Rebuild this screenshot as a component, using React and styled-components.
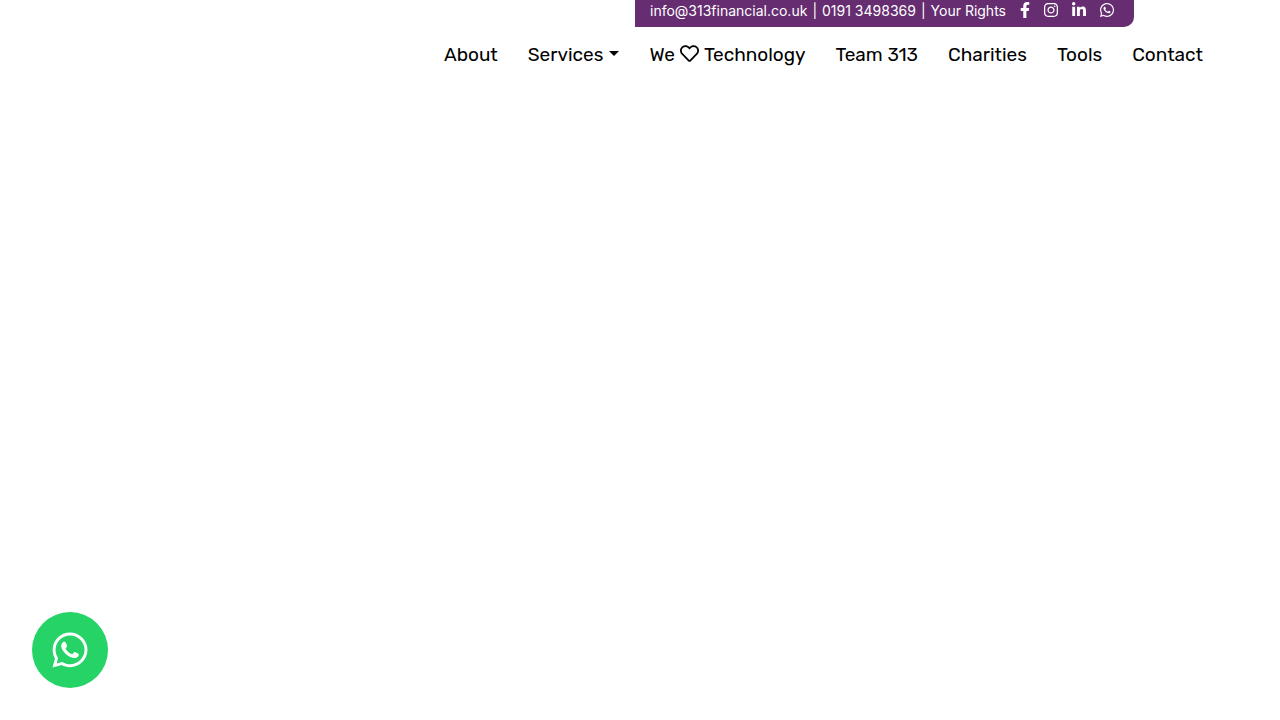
import React from "react";
import styled, { createGlobalStyle } from "styled-components";
import { FaFacebookF, FaInstagram, FaLinkedinIn, FaWhatsapp, FaRegHeart } from "react-icons/fa";

const GlobalStyle = createGlobalStyle`
  *, *::before, *::after { box-sizing: border-box; }
  body {
    margin: 0;
    background: #fff;
    color: #000;
    font-family: Rubik, Roboto, "Liberation Sans", sans-serif;
  }
  a { color: inherit; text-decoration: none; }
  svg { display: block; }
`;

const Header = styled.header`
  display: flex;
  flex-direction: column;
  align-items: flex-end;
`;

const ContactBar = styled.div`
  display: flex;
  align-items: flex-start;
  height: 27px;
  margin-right: 146px;
  padding: 0 20px 0 15px;
  background: #662d71;
  color: #fff;
  border-bottom-right-radius: 10px;
  font-family: Inter, "Liberation Sans", sans-serif;
  font-size: 14px;
  line-height: 22px;
  white-space: nowrap;
`;

const ContactText = styled.div`
  display: flex;
  gap: 5px;
`;

const SocialLinks = styled.div`
  display: flex;
  gap: 14px;
  margin-left: 14px;
  padding-top: 2px;
  font-size: 16px;
`;

const SocialLink = styled.a`
  display: flex;
  justify-content: center;
  width: ${(p) => (p.$narrow ? "10px" : "14px")};

  svg { flex: none; }
`;

const Nav = styled.nav`
  display: flex;
  gap: 30px;
  margin-right: 77px;
  padding: 14px 0;
  font-size: 19px;
  line-height: 28px;
  white-space: nowrap;
`;

const NavLink = styled.a`
  display: flex;
  align-items: center;
  gap: 5px;

  svg { margin-bottom: 3px; }
`;

const NavButton = styled.button`
  display: flex;
  align-items: center;
  gap: 6px;
  padding: 0;
  border: 0;
  background: none;
  color: inherit;
  font: inherit;
`;

const Caret = styled.span`
  margin-bottom: 3px;
  border-top: 5px solid;
  border-left: 5px solid transparent;
  border-right: 5px solid transparent;
`;

const WhatsAppButton = styled.a`
  position: fixed;
  left: 32px;
  bottom: 32px;
  display: flex;
  align-items: center;
  justify-content: center;
  width: 76px;
  height: 76px;
  border-radius: 50%;
  background: #25d366;
  color: #fff;
  font-size: 40px;
`;

export default function App() {
  return (
    <>
      <GlobalStyle />
      <Header>
        <ContactBar>
          <ContactText>
            <a href="mailto:info@313financial.co.uk">info@313financial.co.uk</a>
            <span>|</span>
            <a href="tel:01913498369">0191 3498369</a>
            <span>|</span>
            <a href="#rights">Your Rights</a>
          </ContactText>
          <SocialLinks>
            <SocialLink href="#facebook" aria-label="Facebook" $narrow><FaFacebookF /></SocialLink>
            <SocialLink href="#instagram" aria-label="Instagram"><FaInstagram /></SocialLink>
            <SocialLink href="#linkedin" aria-label="LinkedIn"><FaLinkedinIn /></SocialLink>
            <SocialLink href="#whatsapp" aria-label="WhatsApp"><FaWhatsapp /></SocialLink>
          </SocialLinks>
        </ContactBar>
        <Nav aria-label="Main">
          <NavLink href="#about">About</NavLink>
          <NavButton type="button" aria-haspopup="true">Services<Caret /></NavButton>
          <NavLink href="#technology">We<FaRegHeart />Technology</NavLink>
          <NavLink href="#team">Team 313</NavLink>
          <NavLink href="#charities">Charities</NavLink>
          <NavLink href="#tools">Tools</NavLink>
          <NavLink href="#contact">Contact</NavLink>
        </Nav>
      </Header>
      <WhatsAppButton href="#chat" aria-label="Chat on WhatsApp"><FaWhatsapp /></WhatsAppButton>
    </>
  );
}
